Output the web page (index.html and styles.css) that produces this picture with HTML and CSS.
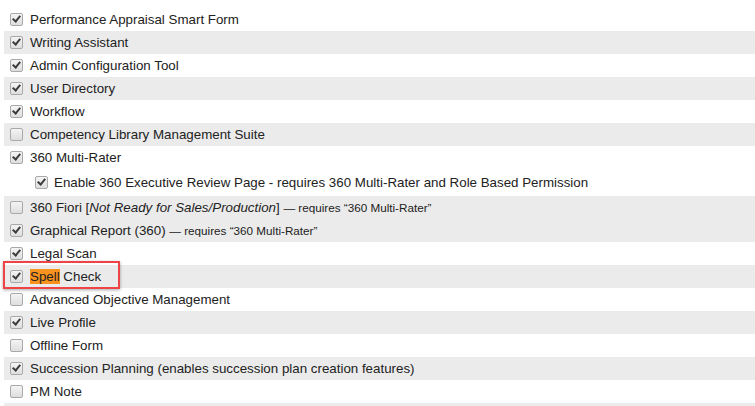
FILE: index.html
```html
<!DOCTYPE html>
<html>
<head>
<meta charset="utf-8">
<link rel="stylesheet" href="styles.css">
</head>
<body>
<ul class="list">
  <li class="row"><span class="cb on"></span><span class="lbl">Performance Appraisal Smart Form</span></li>
  <li class="row alt"><span class="cb on"></span><span class="lbl">Writing Assistant</span></li>
  <li class="row"><span class="cb on"></span><span class="lbl">Admin Configuration Tool</span></li>
  <li class="row alt"><span class="cb on"></span><span class="lbl">User Directory</span></li>
  <li class="row"><span class="cb on"></span><span class="lbl">Workflow</span></li>
  <li class="row alt"><span class="cb"></span><span class="lbl">Competency Library Management Suite</span></li>
  <li class="row"><span class="cb on"></span><span class="lbl">360 Multi-Rater</span></li>
  <li class="row sub"><span class="cb on"></span><span class="lbl">Enable 360 Executive Review Page - requires 360 Multi-Rater and Role Based Permission</span></li>
  <li class="row alt"><span class="cb"></span><span class="lbl">360 Fiori [<i>Not Ready for Sales/Production</i>] <small>— requires “360 Multi-Rater”</small></span></li>
  <li class="row alt"><span class="cb on"></span><span class="lbl">Graphical Report (360) <small>— requires “360 Multi-Rater”</small></span></li>
  <li class="row"><span class="cb on"></span><span class="lbl">Legal Scan</span></li>
  <li class="row alt marked"><span class="cb on"></span><span class="lbl"><mark class="hl">Spell</mark> Check</span><span class="redbox"></span></li>
  <li class="row"><span class="cb"></span><span class="lbl">Advanced Objective Management</span></li>
  <li class="row alt"><span class="cb on"></span><span class="lbl">Live Profile</span></li>
  <li class="row"><span class="cb"></span><span class="lbl">Offline Form</span></li>
  <li class="row alt"><span class="cb on"></span><span class="lbl">Succession Planning (enables succession plan creation features)</span></li>
  <li class="row"><span class="cb"></span><span class="lbl">PM Note</span></li>
  <li class="row alt"><span class="cb"></span><span class="lbl"></span></li>
</ul>
</body>
</html>
```
FILE: styles.css
```css
html, body {
  margin: 0;
  padding: 0;
  background: #fff;
  overflow: hidden;
}
body {
  font-family: "Liberation Sans", Arial, sans-serif;
  font-size: 13.33px;
  color: #222;
}
.list {
  list-style: none;
  margin: 0;
  padding: 8px 0 0 4px;
}
.row {
  position: relative;
  display: flex;
  align-items: center;
  height: 23px;
  padding-left: 6px;
  gap: 7px;
}
.row.alt {
  background: #ebebeb;
}
.row.sub {
  height: 27px;
  padding-left: 31px;
  gap: 6px;
}
.cb {
  flex: none;
  box-sizing: border-box;
  width: 13px;
  height: 13px;
  border: 1px solid #a9a9a9;
  border-radius: 2px;
  background: linear-gradient(#f4f4f4, #dedede);
  position: relative;
}
.cb.on::after {
  content: "";
  position: absolute;
  left: 3px;
  top: 0px;
  width: 3px;
  height: 6px;
  border: solid #3c3c3c;
  border-width: 0 2px 2px 0;
  transform: rotate(40deg);
}
.lbl {
  white-space: nowrap;
  line-height: 16px;
}
.lbl small {
  font-size: 11.7px;
}
.hl {
  background: #f7931e;
  color: #222;
}
.redbox {
  position: absolute;
  left: -1px;
  top: -4px;
  width: 113px;
  height: 24px;
  border: 2px solid #ee4347;
  box-shadow: 0 1px 3px rgba(0,0,0,0.35);
}
```
